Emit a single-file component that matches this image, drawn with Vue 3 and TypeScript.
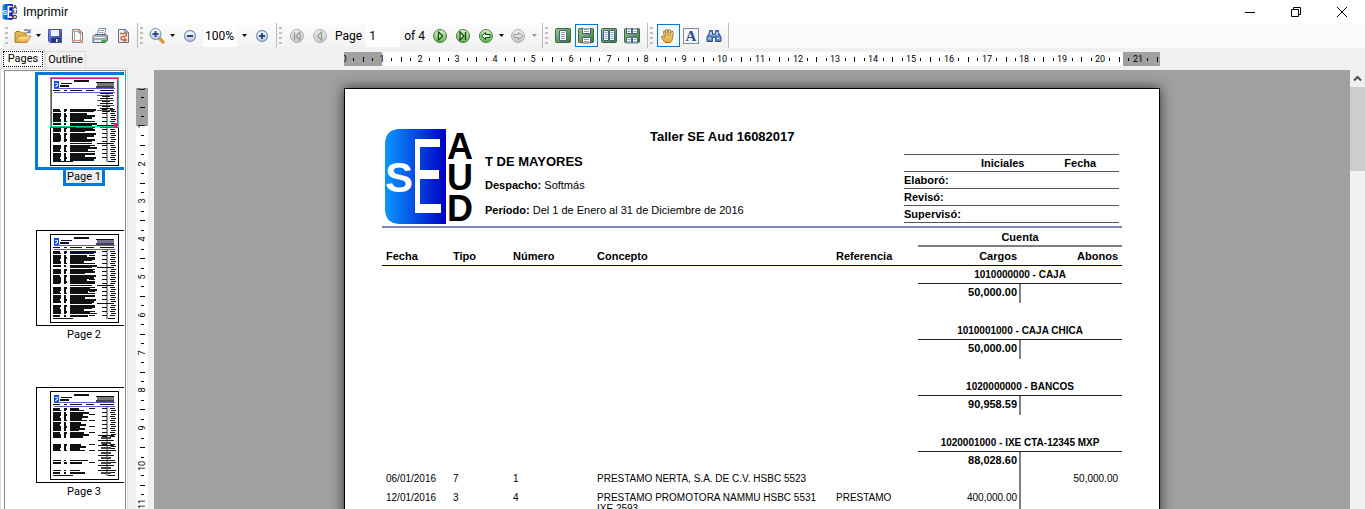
<script setup lang="ts">
import { ref } from 'vue'

interface Transaction {
  date: string
  kind: string
  number: string
  concept: string
  reference: string
  debit: string
  credit: string
}

interface Account {
  name: string
  balance: string
  rows: Transaction[]
}

interface Mark {
  x: number
  y: number
  w: number
  h: number
  c: string
}

const accounts: Account[] = [
  { name: '1010000000 - CAJA', balance: '50,000.00', rows: [] },
  { name: '1010001000 - CAJA CHICA', balance: '50,000.00', rows: [] },
  { name: '1020000000 - BANCOS', balance: '90,958.59', rows: [] },
  {
    name: '1020001000 - IXE CTA-12345 MXP',
    balance: '88,028.60',
    rows: [
      { date: '06/01/2016', kind: '7', number: '1', concept: 'PRESTAMO NERTA, S.A. DE C.V. HSBC 5523', reference: '', debit: '', credit: '50,000.00' },
      { date: '12/01/2016', kind: '3', number: '4', concept: 'PRESTAMO PROMOTORA NAMMU HSBC 5531 IXE 2593', reference: 'PRESTAMO', debit: '400,000.00', credit: '' },
    ],
  },
]

const cm = 37.8
const rulerTicks = (units: number) =>
  Array.from({ length: units * 4 + 3 }, (_, i) => i + 1)
    .filter((i) => i % 4 !== 0)
    .map((i) => ({ at: Math.round((i * cm) / 4), half: i % 4 === 2 ? 2 : 1 }))
const rulerLabels = (units: number) =>
  Array.from({ length: units + 1 }, (_, i) => ({ at: Math.round(i * cm), text: String(i) }))

const hTicks = rulerTicks(21)
const hLabels = rulerLabels(21)
const vTicks = rulerTicks(11)
const vLabels = rulerLabels(11)

function thumbMarks(page: number): Mark[] {
  const marks: Mark[] = []
  const ink = '#111'
  const add = (x: number, y: number, w: number, h: number, c = ink) => marks.push({ x, y, w, h, c })
  add(24, 3, 15, 2)
  add(11, 6, 11, 1)
  add(10, 8, 9, 2)
  add(10, 11, 21, 1)
  add(46, 5, 18, 1)
  add(47, 6, 17, 3, '#777')
  add(46, 9, 18, 2, '#444')
  add(4, 11, 61, 1, '#5a5ac8')
  add(56, 15, 2, 70, '#999')
  add(3, 13, 7, 1)
  add(14, 13, 3, 1)
  add(20, 13, 12, 1)
  add(36, 13, 8, 1)
  add(50, 13, 14, 1)
  add(4, 15, 61, 1, '#5a5ac8')
  const wrapped = [26, 24, 17, 25, 22, 14, 20, 27, 18, 23, 25, 15]
  const first = page === 1 ? 32 : 17
  if (page === 1) {
    for (let y = 16; y < 32; y += 5) {
      add(50, y, 13, 1)
      add(47, y + 2, 17, 1, '#555')
      add(52, y + 3, 8, 1)
    }
  }
  for (let y = first, i = 0; y < 83; y += 2, i++) {
    if (page === 3 && ((y > 45 && y < 53) || (y > 60 && y < 69) || (y > 72 && y < 79))) continue
    if (page !== 3 && i % 9 === 8) {
      add(20, y, 22, 1)
      add(47, y, 17, 1)
      continue
    }
    const h = i % 5 === 1 ? 1 : 2
    add(3, y, i % 4 === 0 ? 7 : 8, h)
    add(14, y, i % 3 === 0 ? 3 : 2, h)
    add(20, y, page === 3 ? 9 + ((i * 5) % 11) : wrapped[i % 12], h)
    if (i % 3 === 0 || (page === 2 && i % 2 === 0)) add(39, y, 6, 1)
    if (i % 2 === 0) add(52, y, 5, 1)
    add(i % 2 ? 61 : 60, y, 5, 1)
  }
  if (page === 3) {
    for (let y = 44; y < 82; y += 5) {
      add(48, y, 16, 1)
      add(51, y + 2, 10, 2, '#444')
    }
  }
  add(3, 84, 20, 1)
  add(58, 84, 7, 1)
  return marks
}

const thumbs = [1, 2, 3].map((n) => ({ n, marks: thumbMarks(n) }))
const selected = ref(1)
const pageNumber = ref('1')
const zoom = ref('100%')
</script>

<template>
  <div class="window">
    <svg class="defs" width="0" height="0" aria-hidden="true">
      <defs>
        <linearGradient id="gBlue" x1="0" x2="1"><stop offset="0" stop-color="#0a96ff" /><stop offset="1" stop-color="#0000c4" /></linearGradient>
        <linearGradient id="gGreen" x1="0" y1="0" x2="0" y2="1"><stop offset="0" stop-color="#d8f2cc" /><stop offset="1" stop-color="#5cb443" /></linearGradient>
        <linearGradient id="gGrey" x1="0" y1="0" x2="0" y2="1"><stop offset="0" stop-color="#eeeeee" /><stop offset="1" stop-color="#c4c4c4" /></linearGradient>
        <linearGradient id="gSky" x1="0" y1="0" x2="0" y2="1"><stop offset="0" stop-color="#ffffff" /><stop offset="1" stop-color="#b4c8dc" /></linearGradient>
        <linearGradient id="gGold" x1="0" y1="0" x2="0" y2="1"><stop offset="0" stop-color="#ffe9a0" /><stop offset="1" stop-color="#e0a83a" /></linearGradient>
        <linearGradient id="gLeaf" x1="0" y1="0" x2="1" y2="1"><stop offset="0" stop-color="#9cc896" /><stop offset="1" stop-color="#35753a" /></linearGradient>
        <linearGradient id="gNavy" x1="0" y1="0" x2="1" y2="1"><stop offset="0" stop-color="#7f96e0" /><stop offset="1" stop-color="#26358e" /></linearGradient>
      </defs>
    </svg>

    <header class="titlebar">
      <svg class="appicon" width="16" height="16" viewBox="0 0 90 96" aria-hidden="true">
        <path d="M14 0H61V95H14Q0 94 0 80V15Q0 1 14 0Z" fill="url(#gBlue)" />
        <path d="M30 10H56V20H40V40H54V51H40V74H56V84H30Z" fill="#fff" />
        <text class="letter" x="14" y="63" font-size="43" fill="#fff">S</text>
        <text class="letter" x="75" y="30" font-size="36">A</text>
        <text class="letter" x="75" y="61" font-size="36">U</text>
        <text class="letter" x="75" y="92" font-size="36">D</text>
      </svg>
      <h1>Imprimir</h1>
      <div class="winbuttons">
        <button type="button" aria-label="Minimizar"><svg width="12" height="12" viewBox="0 0 12 12"><path d="M1 6.500H11" stroke="#000" /></svg></button>
        <button type="button" aria-label="Restaurar"><svg width="12" height="12" viewBox="0 0 12 12"><path d="M1.500 3.500H8.500V10.500H1.500ZM3.500 3.500V1.500H10.500V8.500H8.500" fill="none" stroke="#000" /></svg></button>
        <button type="button" aria-label="Cerrar"><svg width="12" height="12" viewBox="0 0 12 12"><path d="M1 1L11 11M11 1L1 11" stroke="#000" /></svg></button>
      </div>
    </header>

    <nav class="toolbars" aria-label="Herramientas">
      <div class="group">
        <i class="grip"></i>
        <button type="button" aria-label="Abrir">
          <svg width="18" height="16" viewBox="0 0 18 16"><path d="M1 14V4.500L2 3.500H6L7.500 5H12V8" fill="#e8b650" stroke="#a87820" /><path d="M1 14.500L5 8H17L13 14.500Z" fill="url(#gGold)" stroke="#c08c2c" /><path d="M10 2.500Q13 0.500 15 3.500M16 1V4.500H12.500" fill="none" stroke="#5f7fae" stroke-width="1.300" /></svg>
        </button>
        <button type="button" class="drop" aria-label="Opciones de abrir"><svg width="5" height="3" viewBox="0 0 5 3"><path d="M0 0H5L2.500 3Z" /></svg></button>
        <button type="button" aria-label="Guardar">
          <svg width="16" height="16" viewBox="0 0 16 16"><path d="M1.500 1.500H14.500V14.500H3L1.500 13Z" fill="url(#gNavy)" stroke="#4454b4" /><path d="M4 2H12V8H4Z" fill="#eef2ff" /><path d="M4.500 10H11.500V14.500H4.500Z" fill="#27336f" /><path d="M9 11H10.500V14H9Z" fill="#fff" /></svg>
        </button>
        <button type="button" class="narrow" aria-label="Configurar página">
          <svg width="16" height="16" viewBox="0 0 16 16"><path d="M3.500 1.500H10.500L13.500 4.500V14.500H3.500Z" fill="#f4f8fc" stroke="#64809c" /><path d="M10 1.500V5H13.500" fill="#cfdbe8" stroke="#64809c" /><path d="M5.500 1V15M11.500 2V15M3 3.500H13M3 12.500H14" stroke="#e0906c" /></svg>
        </button>
        <button type="button" aria-label="Imprimir">
          <svg width="16" height="16" viewBox="0 0 16 16"><path d="M5 6.500L7 0.500H14L12.500 6.500Z" fill="#fff" stroke="#7c8a9c" /><path d="M7.500 2.500H12M7 4.500H11.500" stroke="#8aa4c8" /><path d="M1 8.500L3 6.500H14L15.500 8V12.500L13 14.500H1Z" fill="#a4acb8" stroke="#59616e" /><path d="M1.500 9.500H13" stroke="#f0f2f6" /><path d="M2 13H9" stroke="#e6e9ee" stroke-width="2" /><path d="M10 12H14V14.500H10Z" fill="#35b535" /></svg>
        </button>
        <button type="button" aria-label="Refrescar">
          <svg width="16" height="16" viewBox="0 0 16 16"><path d="M3.500 1.500H10.500L13.500 4.500V14.500H3.500Z" fill="#e8eff6" stroke="#5b7592" /><path d="M10 1.500V5H13.500" fill="#c4d2e0" stroke="#5b7592" /><path d="M5 5.500H10Q11.500 5.500 11.500 7Q11.500 8.500 9 8.500H8Q6 8.500 6 10.200Q6 12 8 12H11M9 10L11.500 12L9 14" fill="none" stroke="#df6530" stroke-width="1.400" /></svg>
        </button>
      </div>

      <div class="group">
        <i class="grip"></i>
        <button type="button" class="narrow" aria-label="Acercar región">
          <svg width="16" height="16" viewBox="0 0 16 16"><path d="M9.500 9.500L14 14" stroke="#d69a3c" stroke-width="3.500" stroke-linecap="round" /><circle cx="6.500" cy="6" r="5.500" fill="url(#gSky)" stroke="#6c88a8" /><path d="M3.500 6H9.500M6.500 3V9" stroke="#2d4878" stroke-width="1.800" /></svg>
        </button>
        <button type="button" class="drop" aria-label="Opciones de acercar"><svg width="5" height="3" viewBox="0 0 5 3"><path d="M0 0H5L2.500 3Z" /></svg></button>
        <button type="button" class="out" aria-label="Alejar">
          <svg width="14" height="14" viewBox="0 0 14 14"><circle cx="7" cy="7" r="5.500" fill="url(#gSky)" stroke="#7f98b4" stroke-width="1.300" /><path d="M4 7H10" stroke="#2d4878" stroke-width="2" /></svg>
        </button>
        <label class="zoombox">
          <select v-model="zoom" aria-label="Zoom"><option>100%</option><option>150%</option></select>
          <svg width="5" height="3" viewBox="0 0 5 3"><path d="M0 0H5L2.500 3Z" /></svg>
        </label>
        <button type="button" aria-label="Acercar">
          <svg width="14" height="14" viewBox="0 0 14 14"><circle cx="7" cy="7" r="5.500" fill="url(#gSky)" stroke="#7f98b4" stroke-width="1.300" /><path d="M4 7H10M7 4V10" stroke="#2d4878" stroke-width="2" /></svg>
        </button>
      </div>

      <div class="group">
        <i class="grip"></i>
        <button type="button" aria-label="Primera página" disabled>
          <svg width="16" height="16" viewBox="0 0 16 16"><circle cx="8" cy="8" r="6.500" fill="url(#gGrey)" stroke="#b0b0b0" /><path d="M5.500 4V12M11 4V12L7 8Z" fill="#ddd" stroke="#9c9c9c" stroke-width="1.200" /></svg>
        </button>
        <button type="button" aria-label="Página anterior" disabled>
          <svg width="16" height="16" viewBox="0 0 16 16"><circle cx="8" cy="8" r="6.500" fill="url(#gGrey)" stroke="#b0b0b0" /><path d="M9.500 4V12L5.500 8Z" fill="#ddd" stroke="#9c9c9c" stroke-width="1.200" /></svg>
        </button>
        <label class="pagebox"><span>Page</span><input v-model="pageNumber" type="text" /></label>
        <span class="of">of 4</span>
        <button type="button" aria-label="Página siguiente">
          <svg width="16" height="16" viewBox="0 0 16 16"><circle cx="8" cy="8" r="6.500" fill="url(#gGreen)" stroke="#4a7a42" /><path d="M6.500 4V12L10.500 8Z" fill="#d4f4c4" stroke="#17421a" stroke-width="1.200" /></svg>
        </button>
        <button type="button" aria-label="Última página">
          <svg width="16" height="16" viewBox="0 0 16 16"><circle cx="8" cy="8" r="6.500" fill="url(#gGreen)" stroke="#4a7a42" /><path d="M10.500 4V12M5 4V12L9 8Z" fill="#d4f4c4" stroke="#17421a" stroke-width="1.200" /></svg>
        </button>
        <button type="button" class="narrow" aria-label="Atrás">
          <svg width="16" height="16" viewBox="0 0 16 16"><circle cx="8" cy="8" r="6.500" fill="url(#gGreen)" stroke="#4a7a42" /><path d="M3.500 8L7.500 4.500V6.500H12V9.500H7.500V11.500Z" fill="#e4fad8" stroke="#17421a" /></svg>
        </button>
        <button type="button" class="drop" aria-label="Historial atrás"><svg width="5" height="3" viewBox="0 0 5 3"><path d="M0 0H5L2.500 3Z" /></svg></button>
        <button type="button" class="out" aria-label="Adelante" disabled>
          <svg width="16" height="16" viewBox="0 0 16 16"><circle cx="8" cy="8" r="6.500" fill="url(#gGrey)" stroke="#b0b0b0" /><path d="M12.500 8L8.500 4.500V6.500H4V9.500H8.500V11.500Z" fill="#e6e6e6" stroke="#9c9c9c" /></svg>
        </button>
        <button type="button" class="drop" aria-label="Historial adelante" disabled><svg width="5" height="3" viewBox="0 0 5 3"><path d="M0 0H5L2.500 3Z" fill="#999" /></svg></button>
      </div>

      <div class="group wide">
        <i class="grip"></i>
        <button type="button" aria-label="Una página">
          <svg width="16" height="16" viewBox="0 0 16 16"><rect x="0.500" y="0.500" width="15" height="14" rx="1" fill="url(#gLeaf)" stroke="#39683c" /><path d="M4.500 2.500H11.500V12.500H4.500Z" fill="#fff" stroke="#466088" /><path d="M6 4.500H10M6 6.500H10M6 8.500H10M6 10.500H10" stroke="#8aa0c0" /></svg>
        </button>
        <button type="button" class="checked" aria-label="Continuo" aria-pressed="true">
          <svg width="16" height="16" viewBox="0 0 16 16"><rect x="0.500" y="0.500" width="15" height="14" rx="1" fill="url(#gLeaf)" stroke="#39683c" /><path d="M4.500 0V5.500H12.500V0ZM4.500 15V9.500H12.500V15Z" fill="#fff" stroke="#466088" /><path d="M6 1.500H11M6 3.500H11M6 11.500H11M6 13.500H11" stroke="#8aa0c0" /></svg>
        </button>
        <button type="button" aria-label="Páginas enfrentadas">
          <svg width="16" height="16" viewBox="0 0 16 16"><rect x="0.500" y="0.500" width="15" height="14" rx="1" fill="url(#gLeaf)" stroke="#39683c" /><path d="M2.500 2.500H7.500V12.500H2.500ZM8.500 2.500H13.500V12.500H8.500Z" fill="#fff" stroke="#466088" /><path d="M3.500 4.500H6.500M3.500 6.500H6.500M3.500 8.500H6.500M3.500 10.500H6.500M9.500 4.500H12.500M9.500 6.500H12.500M9.500 8.500H12.500M9.500 10.500H12.500" stroke="#8aa0c0" /></svg>
        </button>
        <button type="button" aria-label="Enfrentadas continuas">
          <svg width="16" height="16" viewBox="0 0 16 16"><rect x="0.500" y="0.500" width="15" height="14" rx="1" fill="url(#gLeaf)" stroke="#39683c" /><path d="M2.500 0V5.500H7.500V0ZM8.500 0V5.500H13.500V0ZM2.500 15V9.500H7.500V15ZM8.500 15V9.500H13.500V15Z" fill="#fff" stroke="#466088" /><path d="M3.500 1.500H6.500M3.500 3.500H6.500M9.500 1.500H12.500M9.500 3.500H12.500M3.500 11.500H6.500M3.500 13.500H6.500M9.500 11.500H12.500M9.500 13.500H12.500" stroke="#8aa0c0" /></svg>
        </button>
      </div>

      <div class="group wide">
        <i class="grip"></i>
        <button type="button" class="checked" aria-label="Mano" aria-pressed="true">
          <svg width="16" height="16" viewBox="0 0 16 16"><path d="M5 14.500L1.500 9.500Q1 8 2.500 8L4.500 9.500L3.500 4Q3.500 2.500 4.700 2.800L5.800 5.500L5.800 2Q6.500 0.500 7.500 1.700L8 5L8.800 1.700Q10 0.800 10.500 2L10.400 5.500L11.800 3.300Q13.500 3 13.200 4.500L12.500 9.500Q12.500 12.500 10.500 14.500Z" fill="url(#gGold)" stroke="#9c7238" stroke-width="0.900" /><path d="M6 5.500V8M8.100 5V8M10.300 5.500V8" stroke="#9c7238" stroke-width="0.700" /></svg>
        </button>
        <button type="button" aria-label="Seleccionar texto">
          <svg width="16" height="16" viewBox="0 0 16 16" aria-hidden="true"><rect x="0.500" y="0.500" width="15" height="15" fill="#f2f6fb" stroke="#222" stroke-dasharray="1 1" /><text class="serif" x="8" y="13" font-size="15" fill="#2c4a88">A</text></svg>
        </button>
        <button type="button" class="narrow" aria-label="Buscar">
          <svg width="16" height="16" viewBox="0 0 16 16"><path d="M3.500 2.500H6.500V6H9.500V2.500H12.500V4.500L15 9V13.500H9.500V9.500H6.500V13.500H1V9L3.500 4.500Z" fill="#5c82c4" stroke="#34548f" /><path d="M2.500 10.500H5M11 10.500H13.500M5 4V7M11 4V7" stroke="#d4e2f8" stroke-width="1.500" /><path d="M7 7.500H9" stroke="#a8c0e8" /></svg>
        </button>
      </div>
    </nav>

    <main class="body">
      <aside class="side">
        <div class="tabs" role="tablist">
          <button type="button" role="tab" class="tab active" aria-selected="true"><span>Pages</span></button>
          <button type="button" role="tab" class="tab" aria-selected="false">Outline</button>
        </div>
        <div class="sidepane">
          <div class="listbox">
            <div class="thumblist">
              <button v-for="t in thumbs" :key="t.n" type="button" class="thumb" :class="{ current: selected === t.n }" @click="selected = t.n">
                <span class="frame">
                  <svg width="69" height="89" viewBox="0 0 69 89" shape-rendering="crispEdges" aria-hidden="true">
                    <rect x="0.500" y="0.500" width="68" height="88" fill="#fff" stroke="#000" />
                    <rect x="4" y="4" width="5" height="7" fill="#0a50e8" />
                    <path d="M5 6H7V8H6M7 9H5" stroke="#bfe0ff" fill="none" />
                    <rect v-for="(m, i) in t.marks" :key="i" :x="m.x" :y="m.y" :width="m.w" :height="m.h" :fill="m.c" />
                    <g v-if="selected === t.n">
                      <path d="M1 1H68V49H67V2H2V49H1Z" fill="#f0107c" />
                      <path d="M0 0H69V50H68V1H1V50H0Z" fill="#00e676" />
                      <path d="M0 49H69V50H0Z" fill="#00e676" />
                      <path d="M0 50H20V51H0ZM26 50H42V51H26ZM50 50H69V51H50Z" fill="#f0107c" />
                      <path d="M64 46H67V50H64Z" fill="#f0107c" />
                    </g>
                  </svg>
                </span>
                <span class="caption">Page {{ t.n }}</span>
              </button>
            </div>
          </div>
        </div>
      </aside>

      <div class="vrule">
        <svg width="12" height="421" viewBox="0 0 12 421" shape-rendering="crispEdges" aria-hidden="true">
          <rect width="12" height="421" fill="#fff" />
          <rect width="12" height="38" fill="#a0a0a0" />
          <rect v-for="t in vTicks" :key="t.at" :x="6 - t.half" :y="t.at" :width="t.half * 2 + 1" height="1" />
          <text v-for="l in vLabels" :key="l.at" :transform="`translate(9 ${l.at}) rotate(-90)`" text-anchor="middle">{{ l.text }}</text>
        </svg>
      </div>

      <section class="stage">
        <div class="hrule">
          <svg width="816" height="14" viewBox="0 0 816 14" shape-rendering="crispEdges" aria-hidden="true">
            <rect width="816" height="14" fill="#fff" />
            <rect width="38" height="14" fill="#a0a0a0" />
            <rect x="779" width="37" height="14" fill="#a0a0a0" />
            <rect v-for="t in hTicks" :key="t.at" :x="t.at" :y="7 - t.half" width="1" :height="t.half * 2 + 1" />
            <text v-for="l in hLabels" :key="l.at" :x="l.at" y="10" text-anchor="middle">{{ l.text }}</text>
          </svg>
        </div>
        <div class="viewer">
          <article class="paper">
            <div class="head">
              <svg class="logo" width="90" height="96" viewBox="0 0 90 96" aria-label="SE AUD" role="img">
                <path d="M14 0H61V95H14Q0 94 0 80V15Q0 1 14 0Z" fill="url(#gBlue)" />
                <path d="M30 10H55V18H35V41H54V50H35V75H56V84H30Z" fill="#fff" />
                <text class="letter" x="14" y="63" font-size="42" fill="#fff">S</text>
                <text class="letter" x="75" y="30" font-size="36">A</text>
                <text class="letter" x="75" y="61" font-size="36">U</text>
                <text class="letter" x="75" y="92" font-size="36">D</text>
              </svg>
              <div class="who">
                <h2 class="company">Taller SE Aud 16082017</h2>
                <h3>T DE MAYORES</h3>
                <p><b>Despacho:</b> Softmás</p>
                <p><b>Período:</b> Del 1 de Enero al 31 de Diciembre de 2016</p>
              </div>
              <table class="sign">
                <thead><tr><td></td><th>Iniciales</th><th>Fecha</th></tr></thead>
                <tbody>
                  <tr><th colspan="3">Elaboró:</th></tr>
                  <tr><th colspan="3">Revisó:</th></tr>
                  <tr><th colspan="3">Supervisó:</th></tr>
                </tbody>
              </table>
            </div>

            <table class="ledger">
              <colgroup><col class="c1" /><col class="c2" /><col class="c3" /><col class="c4" /><col class="c5" /><col class="c6" /><col class="c7" /></colgroup>
              <thead>
                <tr class="top"><td colspan="5"></td><th colspan="2" class="cuenta">Cuenta</th></tr>
                <tr class="cols"><th>Fecha</th><th>Tipo</th><th>Número</th><th>Concepto</th><th>Referencia</th><th class="num debit">Cargos</th><th class="num">Abonos</th></tr>
              </thead>
              <tbody v-for="a in accounts" :key="a.name">
                <tr class="account"><td colspan="5"></td><th colspan="2">{{ a.name }}</th></tr>
                <tr class="balance"><td colspan="5"></td><td class="num debit">{{ a.balance }}</td><td class="right"></td></tr>
                <tr v-for="r in a.rows" :key="r.number" class="entry">
                  <td>{{ r.date }}</td><td>{{ r.kind }}</td><td>{{ r.number }}</td><td>{{ r.concept }}</td><td>{{ r.reference }}</td><td class="num debit">{{ r.debit }}</td><td class="num right">{{ r.credit }}</td>
                </tr>
                <tr v-if="!a.rows.length" class="gap"><td colspan="7"></td></tr>
              </tbody>
            </table>
          </article>
        </div>
      </section>

      <div class="scroll">
        <button type="button" aria-label="Subir"><svg width="9" height="7" viewBox="0 0 9 7"><path d="M1 5.500L4.500 2L8 5.500" fill="none" stroke="#505050" stroke-width="2" /></svg></button>
        <div class="handle"></div>
      </div>
    </main>
  </div>
</template>

<style>
body { margin: 0; }
</style>

<style scoped>
.window { display: flex; flex-direction: column; height: 100vh; overflow: hidden; background: #f0f0f0; font: 12px/16px Roboto, "Open Sans", sans-serif; color: #000; }
.window * { box-sizing: border-box; }
.defs { display: block; flex: none; }
.letter { font-family: "Liberation Sans", Arial, sans-serif; font-weight: 700; text-anchor: middle; }
.serif { font-family: "Liberation Serif", serif; font-weight: 700; text-anchor: middle; }
button { display: flex; align-items: center; justify-content: center; border: 0; padding: 0; margin: 0; background: transparent; font: inherit; color: inherit; }
.titlebar { display: flex; align-items: center; flex: none; height: 23px; padding-left: 2px; background: #fff; }
.titlebar h1 { margin: 0 auto 0 5px; font-size: 12px; font-weight: 400; }
.winbuttons { display: flex; }
.winbuttons button { width: 46px; height: 20px; }

.toolbars { display: flex; flex: none; height: 25px; padding-left: 3px; background: #fbfbfb; }
.group { display: flex; align-items: center; padding: 0 3px 0 2px; border-right: 1px solid #bcbcbc; background: linear-gradient(#fcfcfc, #f1f1f1); }
.group button { width: 23px; height: 23px; }
.group .drop { width: 9px; }
.group .narrow { width: 22px; }
.grip { flex: none; width: 3px; height: 17px; margin-right: 3px; background: repeating-linear-gradient(#c0c0c0 0 2px, transparent 2px 5px); }
.wide .grip { margin-right: 4px; }
.group .out { margin-left: 1px; }
.group .checked { border: 1px solid #0078d7; background: #f3f6fa; }
.zoombox { display: flex; align-items: center; gap: 5px; width: 47px; margin-left: 2px; }
.zoombox select { appearance: none; width: 34px; height: 23px; border: 0; padding: 0 2px; background: #fff; font: inherit; color: inherit; }
.pagebox { display: flex; align-items: center; gap: 4px; margin-left: 4px; }
.pagebox input { width: 34px; height: 23px; border: 0; padding: 0 3px; background: #fff; font: inherit; }
.of { margin: 0 4px; }

.body { display: flex; flex: 1; min-height: 0; }
.side { display: flex; flex-direction: column; flex: none; width: 128px; font-size: 11px; }
.tabs { display: flex; align-items: flex-end; height: 20px; padding-left: 1px; }
.tab { width: 41px; height: 17px; border: 1px solid #dcdcdc; border-bottom: 0; background: #f0f0f0; }
.tab.active { width: 44px; height: 19px; padding: 1px; background: #fff; }
.tab.active span { width: 100%; height: 100%; border: 1px dotted #000; line-height: 14px; }
.sidepane { flex: 1; min-height: 0; padding: 1px 1px 0 3px; border: 1px solid #dcdcdc; border-bottom: 0; background: #fff; }
.listbox { height: 100%; padding: 1px 1px 0 0; border: 1px solid #828790; border-bottom: 0; }
.thumblist { height: 100%; padding-left: 30px; overflow: hidden; }
.thumb { flex-direction: column; width: 98px; margin-bottom: 43px; }
.frame { display: flex; align-items: center; justify-content: center; width: 96px; height: 96px; margin: 1px; border: 1px solid #000; }
.current .frame { width: 98px; height: 98px; margin: 0; border: 3px solid #0078d7; }
.caption { height: 16px; padding: 0 1px; line-height: 15px; }
.current .caption { border: 3px solid #0078d7; border-top: 0; background: #f0f0f0; line-height: 13px; }

.vrule { flex: none; width: 26px; padding: 40px 0 0 8px; overflow: hidden; }
.vrule svg, .hrule svg { display: block; overflow: hidden; }
.vrule text, .hrule text { font: 9px Roboto, sans-serif; }
.stage { display: flex; flex-direction: column; flex: 1; min-width: 0; }
.hrule { display: flex; justify-content: center; flex: none; height: 22px; padding-top: 4px; }
.viewer { flex: 1; min-height: 0; padding-top: 18px; overflow: hidden; background: #a0a0a0; }
.paper { width: 816px; min-height: 1056px; margin: 0 auto; padding: 39px 37px 0; border: 1px solid #000; background: #fff; box-shadow: 0 0 12px rgba(0, 0, 0, 0.7); font: 11px/12px "Liberation Sans", Arial, sans-serif; }
.head { display: flex; height: 100px; padding: 1px 3px 0; border-bottom: 2px solid #8080c0; }
.logo { flex: none; margin-right: 10px; }
.who { flex: 1; min-width: 0; }
.who h2, .who h3 { margin: 0; font-size: 13px; line-height: 16px; }
.who .company { padding-left: 165px; }
.who h3 { margin-top: 9px; }
.who p { margin: 12px 0 0; line-height: 13px; }
.who h3 + p { margin-top: 9px; }
.sign { flex: none; width: 215px; margin-top: 25px; border-collapse: collapse; align-self: flex-start; table-layout: fixed; }
.sign tr { height: 17px; }
.sign th, .sign td { padding: 0; border-top: 1px solid #555; border-bottom: 1px solid #555; line-height: 15px; }
.sign thead td { width: 60px; }
.sign tbody th { text-align: left; }
.ledger { width: 100%; border-spacing: 0; table-layout: fixed; }
.c1 { width: 67px; }
.c2 { width: 60px; }
.c3 { width: 84px; }
.c4 { width: 239px; }
.c5 { width: 86px; }
.c6 { width: 101px; }
.c7 { width: 103px; }
.ledger th, .ledger td { padding: 0 4px; text-align: left; }
.ledger .num { text-align: right; }
.ledger .debit { padding-right: 2px; }
.top { height: 19px; }
.ledger .cuenta { border-bottom: 2px solid #808080; text-align: center; }
.cols { height: 19px; }
.cols th { border-bottom: 1px solid #000064; }
.account { height: 18px; }
.ledger .account th { padding: 0; border-bottom: 1px solid #222; text-align: center; font-size: 10px; }
.balance { height: 19px; font-weight: 700; }
.ledger .balance td { padding-top: 2px; vertical-align: top; }
.ledger .right { border-left: 2px solid #808080; }
.gap { height: 19px; }
.entry { height: 19px; font-size: 10px; line-height: 11px; }
.ledger .entry td { padding-top: 2px; vertical-align: top; }

.scroll { flex: none; width: 15px; padding-top: 22px; }
.scroll button { width: 100%; height: 17px; }
.handle { height: 84px; background: #cdcdcd; }
</style>
